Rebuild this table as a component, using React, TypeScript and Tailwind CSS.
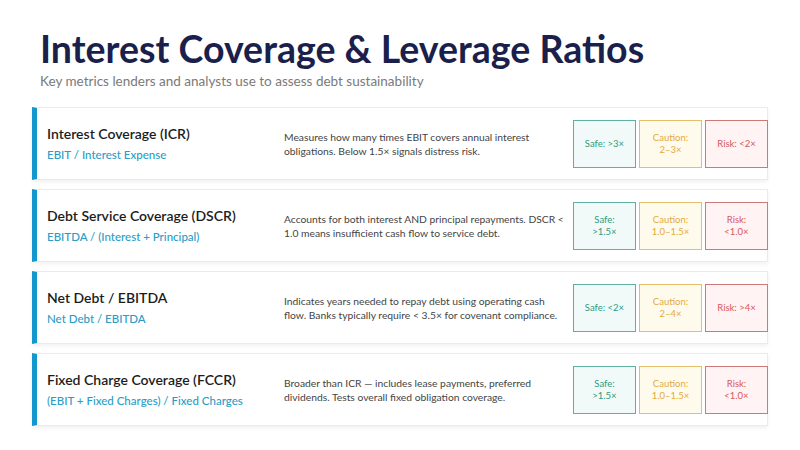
import React from "react";

type Row = {
  title: string;
  formula: string;
  desc: string;
  safe: string[];
  caution: string[];
  risk: string[];
};

const rows: Row[] = [
  {
    title: "Interest Coverage (ICR)",
    formula: "EBIT / Interest Expense",
    desc: "Measures how many times EBIT covers annual interest obligations. Below 1.5× signals distress risk.",
    safe: ["Safe: >3×"],
    caution: ["Caution:", "2–3×"],
    risk: ["Risk: <2×"],
  },
  {
    title: "Debt Service Coverage (DSCR)",
    formula: "EBITDA / (Interest + Principal)",
    desc: "Accounts for both interest AND principal repayments. DSCR < 1.0 means insufficient cash flow to service debt.",
    safe: ["Safe:", ">1.5×"],
    caution: ["Caution:", "1.0–1.5×"],
    risk: ["Risk:", "<1.0×"],
  },
  {
    title: "Net Debt / EBITDA",
    formula: "Net Debt / EBITDA",
    desc: "Indicates years needed to repay debt using operating cash flow. Banks typically require < 3.5× for covenant compliance.",
    safe: ["Safe: <2×"],
    caution: ["Caution:", "2–4×"],
    risk: ["Risk: >4×"],
  },
  {
    title: "Fixed Charge Coverage (FCCR)",
    formula: "(EBIT + Fixed Charges) / Fixed Charges",
    desc: "Broader than ICR — includes lease payments, preferred dividends. Tests overall fixed obligation coverage.",
    safe: ["Safe:", ">1.5×"],
    caution: ["Caution:", "1.0–1.5×"],
    risk: ["Risk:", "<1.0×"],
  },
];

function Box({ lines, kind }: { lines: string[]; kind: "safe" | "caution" | "risk" }) {
  const cls =
    kind === "safe"
      ? "border-[#5eb0a2] bg-[#f1faf8] text-[#2f9a80]"
      : kind === "caution"
      ? "border-[#e2c06a] bg-[#fffbec] text-[#e3aa3c]"
      : "border-[#cf7a78] bg-[#fff3f3] text-[#d9585a]";
  return (
    <div
      className={`flex h-[48px] w-[63px] flex-col items-center justify-center border-[1.5px] text-center text-[9.5px] leading-[12px] ${cls}`}
    >
      {lines.map((l, i) => (
        <div key={i}>{l}</div>
      ))}
    </div>
  );
}

export default function App() {
  return (
    <div
      className="h-[450px] w-[800px] overflow-hidden bg-white"
      style={{ fontFamily: "Lato, 'Noto Sans', sans-serif" }}
    >
      <div className="px-10 pt-[25px]">
        <h1 className="text-[37.5px] font-bold leading-[47px] text-[#1b1f4b]">
          Interest Coverage &amp; Leverage Ratios
        </h1>
        <p className="text-[13.5px] leading-[18px] text-[#7a7a7a]">
          Key metrics lenders and analysts use to assess debt sustainability
        </p>
      </div>
      <div className="mt-[17px] flex flex-col gap-[9px] px-8">
        {rows.map((r) => (
          <div
            key={r.title}
            className="flex h-[73px] items-center border border-l-[5px] border-[#ebebef] border-l-[#1298cf] bg-white shadow-[0_2px_4px_rgba(0,0,0,0.06)]"
          >
            <div className="w-[247px] shrink-0 pl-[10px]">
              <div className="text-[14px] font-semibold leading-[18px] text-[#1c1c1c]">{r.title}</div>
              <div className="mt-[4px] text-[11.5px] font-medium leading-[16px] text-[#2a9dc6]">{r.formula}</div>
            </div>
            <div className="w-[282px] shrink-0 text-[10.3px] leading-[14px] text-[#444]">{r.desc}</div>
            <div className="-mr-[1px] ml-auto flex gap-[3px]">
              <Box lines={r.safe} kind="safe" />
              <Box lines={r.caution} kind="caution" />
              <Box lines={r.risk} kind="risk" />
            </div>
          </div>
        ))}
      </div>
    </div>
  );
}
